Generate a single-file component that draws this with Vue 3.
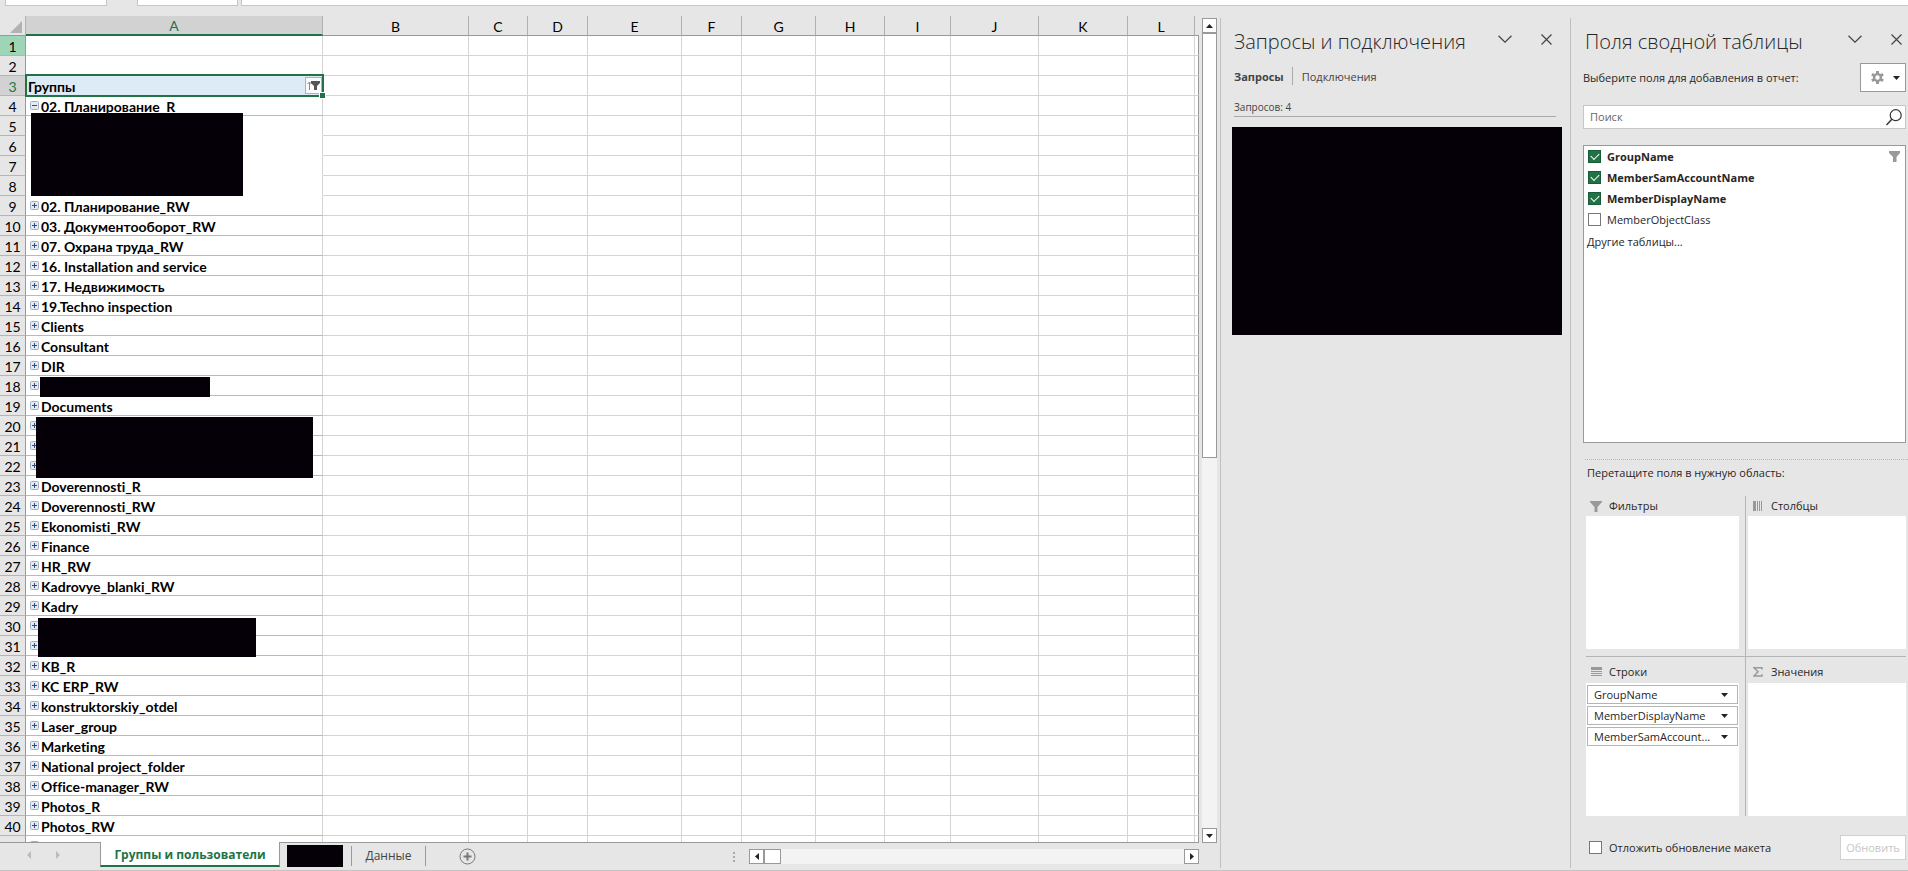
<script setup>
import { ref } from 'vue'

const columns = ['B', 'C', 'D', 'E', 'F', 'G', 'H', 'I', 'J', 'K', 'L']
const labels = {
  4: '02. Планирование_R',
  9: '02. Планирование_RW',
  10: '03. Документооборот_RW',
  11: '07. Охрана труда_RW',
  12: '16. Installation and service',
  13: '17. Недвижимость',
  14: '19.Techno inspection',
  15: 'Clients',
  16: 'Consultant',
  17: 'DIR',
  19: 'Documents',
  23: 'Doverennosti_R',
  24: 'Doverennosti_RW',
  25: 'Ekonomisti_RW',
  26: 'Finance',
  27: 'HR_RW',
  28: 'Kadrovye_blanki_RW',
  29: 'Kadry',
  32: 'KB_R',
  33: 'KC ERP_RW',
  34: 'konstruktorskiy_otdel',
  35: 'Laser_group',
  36: 'Marketing',
  37: 'National project_folder',
  38: 'Office-manager_RW',
  39: 'Photos_R',
  40: 'Photos_RW',
  41: 'Politiki',
}
const hiddenBlocks = { 5: 'hidden-members', 18: 'hidden-one', 20: 'hidden-three', 30: 'hidden-two' }
const rows = Array.from({ length: 41 }, (_, i) => {
  const n = i + 1
  return {
    n,
    number: n < 41 ? n : '',
    label: labels[n] || '',
    group: n === 4 || n > 8,
    member: n > 4 && n < 9,
    block: hiddenBlocks[n],
  }
})

const formula = ref('Группы')
const search = ref('')
const defer = ref(false)
const fields = ref([
  { id: 'f1', name: 'GroupName', on: true, filtered: true },
  { id: 'f2', name: 'MemberSamAccountName', on: true },
  { id: 'f3', name: 'MemberDisplayName', on: true },
  { id: 'f4', name: 'MemberObjectClass', on: false },
])
const rowFields = ['GroupName', 'MemberDisplayName', 'MemberSamAccount...']
</script>

<template>
  <div class="app">
    <div class="formula-bar">
      <div class="name-box"></div>
      <div class="fx-box"></div>
      <div class="formula-box"><input v-model="formula" aria-label="Строка формул" /></div>
    </div>

    <div class="main">
      <section class="sheet">
        <div class="sheet-top">
          <div class="grid-wrap">
            <table class="grid">
              <colgroup>
                <col class="c-head" /><col class="c-A" />
                <col v-for="c in columns" :key="c" :class="'c-' + c" />
                <col />
              </colgroup>
              <thead>
                <tr>
                  <th class="corner"><svg width="12" height="12" viewBox="0 0 12 12"><path d="M12 0V12H0Z" fill="#b2b2b2" /></svg></th>
                  <th class="active">A</th>
                  <th v-for="c in columns" :key="c">{{ c }}</th>
                  <th class="rest"></th>
                </tr>
              </thead>
              <tbody>
                <tr v-for="r in rows" :key="r.n">
                  <th :class="{ hover: r.n === 1, current: r.n === 3 }">{{ r.number }}</th>
                  <td class="a" :class="{ group: r.group, member: r.member, title: r.n === 3 }">
                    <div v-if="r.n === 3" class="title-cell">
                      <span>Группы</span>
                      <button class="filter-btn" aria-label="Фильтр">
                        <svg width="15" height="15" viewBox="0 0 15 15">
                          <path d="M3.500 12V4M1.500 6L3.500 4L5.500 6" fill="none" stroke="#888" />
                          <path d="M5 3H14V5L11 8V12H8V8L5 5Z" fill="#555" />
                        </svg>
                      </button>
                    </div>
                    <div v-else-if="r.group" class="group-cell">
                      <button class="toggle" :aria-label="r.n === 4 ? 'Свернуть' : 'Развернуть'">
                        <svg width="9" height="9" viewBox="0 0 9 9">
                          <rect x=".5" y=".5" width="8" height="8" rx="1" fill="#e4eaf2" stroke="#a3b0c4" />
                          <path :d="r.n === 4 ? 'M2 4.500H7' : 'M2 4.500H7M4.500 2V7'" stroke="#2f4a86" />
                        </svg>
                      </button>
                      <span>{{ r.label }}</span>
                    </div>
                    <div v-if="r.block" class="block" :class="r.block"></div>
                    <div v-if="r.n === 3" class="selection"></div>
                  </td>
                  <td v-for="c in columns" :key="c"></td>
                  <td class="rest"></td>
                </tr>
              </tbody>
            </table>
          </div>
          <div class="vscroll">
            <button class="arrow" aria-label="Вверх"><svg width="7" height="4" viewBox="0 0 7 4"><path d="M0 4L3.500 0L7 4Z" fill="#222" /></svg></button>
            <div class="vthumb"></div>
            <div class="track"></div>
            <button class="arrow" aria-label="Вниз"><svg width="7" height="4" viewBox="0 0 7 4"><path d="M0 0H7L3.500 4Z" fill="#222" /></svg></button>
          </div>
        </div>
        <div class="sheet-bottom">
          <div class="nav">
            <svg width="4" height="8" viewBox="0 0 4 8"><path d="M4 0V8L0 4Z" fill="#bbb" /></svg>
            <svg width="4" height="8" viewBox="0 0 4 8"><path d="M0 0V8L4 4Z" fill="#bbb" /></svg>
          </div>
          <button class="tab tab-on">Группы и пользователи</button>
          <div class="tab-hidden"></div>
          <button class="tab tab-off">Данные</button>
          <button class="add" aria-label="Новый лист">
            <svg width="17" height="17" viewBox="0 0 17 17"><circle cx="8.500" cy="8.500" r="7.500" fill="none" stroke="#777" /><path d="M4.500 8.500H12.500M8.500 4.500V12.500" stroke="#777" stroke-width="2" /></svg>
          </button>
          <svg class="dots" width="2" height="10" viewBox="0 0 2 10"><path d="M0 0H2V2H0ZM0 4H2V6H0ZM0 8H2V10H0Z" fill="#aaa" /></svg>
          <div class="hscroll">
            <button class="arrow" aria-label="Влево"><svg width="4" height="7" viewBox="0 0 4 7"><path d="M4 0V7L0 3.500Z" fill="#222" /></svg></button>
            <div class="hthumb"></div>
            <div class="track"></div>
            <button class="arrow" aria-label="Вправо"><svg width="4" height="7" viewBox="0 0 4 7"><path d="M0 0V7L4 3.500Z" fill="#222" /></svg></button>
          </div>
        </div>
      </section>

      <aside class="panel queries">
        <header>
          <h2>Запросы и подключения</h2>
          <button class="icon" aria-label="Параметры"><svg width="14" height="8" viewBox="0 0 14 8"><path d="M.5 .8L7 7.200L13.500 .8" fill="none" stroke="#444" stroke-width="1.200" /></svg></button>
          <button class="icon" aria-label="Закрыть"><svg width="11" height="11" viewBox="0 0 11 11"><path d="M.5 .5L10.500 10.500M10.500 .5L.5 10.500" stroke="#444" stroke-width="1.200" /></svg></button>
        </header>
        <nav class="q-tabs">
          <button class="on">Запросы</button>
          <button>Подключения</button>
        </nav>
        <p class="count">Запросов: 4</p>
        <div class="q-list"></div>
      </aside>

      <aside class="panel fields">
        <header>
          <h2>Поля сводной таблицы</h2>
          <button class="icon" aria-label="Параметры"><svg width="14" height="8" viewBox="0 0 14 8"><path d="M.5 .8L7 7.200L13.500 .8" fill="none" stroke="#444" stroke-width="1.200" /></svg></button>
          <button class="icon" aria-label="Закрыть"><svg width="11" height="11" viewBox="0 0 11 11"><path d="M.5 .5L10.500 10.500M10.500 .5L.5 10.500" stroke="#444" stroke-width="1.200" /></svg></button>
        </header>
        <div class="choose">
          <span>Выберите поля для добавления в отчет:</span>
          <button class="gear" aria-label="Сервис">
            <svg width="13" height="13" viewBox="0 0 13 13">
              <path d="M6.500 0V13M.9 3.200L12.100 9.800M.9 9.800L12.100 3.200" stroke="#999" stroke-width="3" />
              <circle cx="6.500" cy="6.500" r="3.400" fill="#fff" stroke="#999" stroke-width="2.400" />
            </svg>
            <svg width="7" height="4" viewBox="0 0 7 4"><path d="M0 0H7L3.500 4Z" fill="#222" /></svg>
          </button>
        </div>
        <div class="search">
          <input v-model="search" placeholder="Поиск" aria-label="Поиск" />
          <svg width="16" height="17" viewBox="0 0 16 17"><circle cx="9.700" cy="6.200" r="5.500" fill="none" stroke="#333" stroke-width="1.200" /><path d="M5.800 10.300L.5 16" stroke="#333" stroke-width="1.400" /></svg>
        </div>
        <div class="list">
          <div v-for="f in fields" :key="f.id" class="field">
            <input :id="f.id" v-model="f.on" type="checkbox" />
            <label :for="f.id" :class="{ bold: f.on }">{{ f.name }}</label>
            <svg v-if="f.filtered" width="11" height="11" viewBox="0 0 11 11"><path d="M0 0H11V2L7.500 6V11H4V6L0 2Z" fill="#999" /></svg>
          </div>
          <a class="more" href="#">Другие таблицы...</a>
        </div>
        <p class="drag">Перетащите поля в нужную область:</p>
        <div class="areas">
          <div class="area">
            <h3><svg width="12" height="11" viewBox="0 0 12 11"><path d="M0 0H12V1L7.500 6V11H4.500V6L0 1Z" fill="#999" /></svg>Фильтры</h3>
            <div class="drop"></div>
          </div>
          <div class="area">
            <h3><svg width="10" height="10" viewBox="0 0 10 10"><path d="M0 0H3V10H0ZM4 0H5V10H4ZM6 0H7V10H6ZM8 0H9V10H8Z" fill="#999" /></svg>Столбцы</h3>
            <div class="drop"></div>
          </div>
          <div class="area">
            <h3><svg width="12" height="10" viewBox="0 0 12 10"><path d="M1 0H12V3H1ZM1 4H12V5H1ZM1 6H12V7H1ZM1 8H12V9H1Z" fill="#999" /></svg>Строки</h3>
            <div class="drop">
              <button v-for="name in rowFields" :key="name" class="chip">
                <span>{{ name }}</span>
                <svg width="7" height="4" viewBox="0 0 7 4"><path d="M0 0H7L3.500 4Z" fill="#222" /></svg>
              </button>
            </div>
          </div>
          <div class="area">
            <h3><svg width="10" height="10" viewBox="0 0 10 10"><path d="M9 2.500V.8H1L5 4.800L1 9H9V7.200" fill="none" stroke="#999" stroke-width="1.500" /></svg>Значения</h3>
            <div class="drop"></div>
          </div>
        </div>
        <footer>
          <input id="defer" v-model="defer" type="checkbox" />
          <label for="defer">Отложить обновление макета</label>
          <button disabled>Обновить</button>
        </footer>
      </aside>
    </div>
  </div>
</template>

<style>
body { margin: 0; background: #e6e6e6; }
</style>

<style scoped>
.app {
  display: flex;
  flex-direction: column;
  height: 100vh;
  box-sizing: border-box;
  border-bottom: 1px solid #c3c3c3;
  background: #e6e6e6;
  color: #262626;
  font: 11px/16px "Open Sans", "Noto Sans", sans-serif;
  overflow: hidden;
}
.app * { box-sizing: border-box; }
button { font: inherit; color: inherit; margin: 0; padding: 0; border: 0; background: none; }
svg { display: block; flex: none; }
h2, h3, p { margin: 0; font-weight: 400; }

.formula-bar { display: flex; flex: none; height: 6px; padding-left: 5px; }
.name-box, .fx-box, .formula-box { background: #fff; border: 1px solid #c6c6c6; border-top: 0; }
.name-box { width: 102px; margin-right: 30px; }
.fx-box { width: 101px; margin-right: 3px; }
.formula-box { display: flex; align-items: flex-end; flex: 1; border-right: 0; overflow: hidden; }
.formula-box input { flex: 1; height: 24px; padding: 0 0 4px 20px; border: 0; outline: 0; font: 14px/20px Lato, sans-serif; background: none; }

.main { display: flex; flex: 1; min-height: 0; padding-top: 10px; }
.sheet { display: flex; flex-direction: column; flex: 1; min-width: 0; }
.sheet-top { display: flex; flex: 1; min-height: 0; padding-right: 3px; }
.grid-wrap { flex: 1; min-width: 0; margin-right: 3px; overflow: hidden; border-bottom: 1px solid #999; }

.grid { table-layout: fixed; width: 100%; border-spacing: 0; font: 14px/17px Lato, "Open Sans", sans-serif; font-variant-ligatures: none; color: #000; }
.c-head { width: 26px; } .c-A { width: 297px; } .c-B { width: 146px; } .c-C { width: 59px; }
.c-D { width: 60px; } .c-E { width: 94px; } .c-F { width: 60px; } .c-G { width: 74px; }
.c-H { width: 69px; } .c-I { width: 66px; } .c-J { width: 88px; } .c-K { width: 89px; } .c-L { width: 67px; }
.grid th, .grid td { height: 20px; padding: 0; border-right: 1px solid #d4d4d4; border-bottom: 1px solid #d4d4d4; }
.grid th { padding-top: 2px; font-weight: 400; text-align: center; background: #e6e6e6; }
.grid td { background: #fff; }
.grid thead th { border-right-color: #b0b0b0; border-bottom-color: #999; }
.grid tbody th { border-right-color: #999; border-bottom-color: #b5b5b5; }
.grid thead .active { background: #d2d2d2; color: #217346; border-bottom: 2px solid #217346; line-height: 16px; }
.grid thead .corner { padding-left: 10px; }
.grid thead .rest { border-right: 0; }
.grid tbody .rest { border-right-color: #999; }
.grid .hover { background: #9fd5b7; }
.grid .current { background: #d2d2d2; color: #217346; }
.a { position: relative; font-weight: 700; white-space: nowrap; }
.a span { padding-top: 2px; }
.grid .group { border-bottom-color: #9bc2e6; }
.grid .member { border-bottom-color: #fff; }
.grid .title { background: #ddebf7; }
.title-cell { display: flex; align-items: center; justify-content: space-between; height: 19px; padding-left: 2px; }
.filter-btn { display: flex; width: 17px; height: 17px; border: 1px solid #a8b4c4; background: #fafbfd; }
.group-cell { display: flex; align-items: center; height: 19px; padding-left: 4px; gap: 2px; }
.selection { position: absolute; z-index: 3; inset: -2px -2px -2px -1px; border: 2px solid #217346; }
.selection::after { content: ""; position: absolute; right: -3px; bottom: -3px; width: 5px; height: 5px; background: #217346; outline: 1px solid #fff; }
.block { position: absolute; z-index: 2; background: #050008; }
.hidden-members { left: 5px; top: -3px; width: 212px; height: 83px; }
.hidden-one { left: 14px; top: 1px; width: 170px; height: 20px; }
.hidden-three { left: 10px; top: 1px; width: 277px; height: 61px; }
.hidden-two { left: 12px; top: 2px; width: 218px; height: 39px; }

.vscroll { display: flex; flex-direction: column; width: 15px; padding-top: 2px; }
.arrow { display: flex; align-items: center; justify-content: center; flex: none; width: 15px; height: 15px; border: 1px solid #999; background: #fff; }
.vthumb { flex: 0 0 425px; border: 1px solid #999; background: #fff; }
.track { flex: 1; background: #f3f3f3; }

.sheet-bottom { display: flex; align-items: flex-start; flex: none; height: 27px; padding-right: 21px; }
.nav { display: flex; gap: 25px; width: 100px; padding: 8px 0 0 27px; }
.tab { font-size: 12px; white-space: nowrap; }
.tab-on { position: relative; width: 180px; height: 25px; margin-top: -1px; padding-top: 2px; border: 1px solid #999; border-width: 0 1px; border-bottom: 2px solid #217346; background: #fff; color: #217346; font-weight: 700; }
.tab-hidden { width: 56px; height: 22px; margin: 2px 8px 0 7px; background: #050008; }
.tab-off { width: 75px; height: 20px; margin-top: 3px; border: 1px solid #999; border-width: 0 1px; color: #444; }
.add { margin: 5px auto 0 33px; }
.dots { margin: 9px 14px 0 0; }
.hscroll { display: flex; width: 450px; margin-top: 6px; }
.hthumb { width: 17px; border: 1px solid #999; background: #fff; }

.panel { flex: none; display: flex; flex-direction: column; margin: 2px 0; border-left: 1px solid #c0c0c0; }
.panel header { display: flex; align-items: flex-start; padding-top: 10px; height: 43px; }
.panel h2 { font-size: 20px; line-height: 28px; font-weight: 300; white-space: nowrap; }
.panel header .icon { height: 22px; }
.panel header .icon:nth-of-type(1) { margin-left: auto; }
.queries { width: 350px; padding: 0 8px 0 11px; }
.queries header { padding-left: 2px; padding-right: 10px; }
.queries header .icon:nth-of-type(2) { margin-left: 29px; }
.q-tabs { display: flex; margin: 6px 0 0 2px; }
.q-tabs button { height: 18px; padding-top: 1px; color: #444; }
.q-tabs .on { font-weight: 700; padding-right: 8px; margin-right: 9px; border-right: 1px solid #aaa; }
.count { margin: 14px 6px 10px 2px; padding-bottom: 1px; border-bottom: 1px solid #aaa; font-size: 10px; color: #444; }
.q-list { height: 208px; background: #050008; }

.fields { width: 338px; padding: 0 2px 0 12px; }
.fields header { padding: 10px 4px 0 2px; }
.fields header .icon:nth-of-type(2) { margin-left: 29px; }
.choose { display: flex; justify-content: space-between; align-items: center; margin-top: 2px; height: 29px; }
.gear { display: flex; align-items: center; justify-content: center; gap: 9px; width: 46px; height: 29px; padding-left: 4px; border: 1px solid #999; background: #fff; }
.search { display: flex; align-items: center; height: 24px; margin: 13px 0 16px; padding: 0 3px 0 6px; border: 1px solid #c6c6c6; background: #fff; }
.search input { flex: 1; border: 0; padding: 0; outline: 0; font: inherit; background: none; }
.search input::placeholder { color: #666; }
.list { flex: 1; min-height: 120px; border: 1px solid #999; background: #fff; overflow: hidden; }
.field { display: flex; align-items: center; height: 21px; padding: 0 5px 0 4px; }
.field label { flex: 1; margin-left: 6px; }
.field .bold { font-weight: 700; }
input[type="checkbox"] { appearance: none; width: 13px; height: 13px; margin: 0; border: 1px solid #777; background: #fff; }
input[type="checkbox"]:checked { border-color: #185c37; background: #217346; }
input[type="checkbox"]:checked::after { content: ""; display: block; width: 7px; height: 4px; margin: 2px; border: solid #fff; border-width: 0 0 1px 1px; transform: rotate(-45deg); }
.more { display: block; padding: 4px 3px; color: inherit; text-decoration: none; }
.drag { margin: 16px -2px 15px 2px; padding: 5px 0 0 2px; border-top: 1px dotted #b5b5b5; }
.areas { display: grid; grid-template-columns: 160px 1fr; margin-left: 3px; }
.area { padding-bottom: 7px; }
.area:nth-child(odd) { padding-right: 6px; border-right: 1px solid #b5b5b5; }
.area:nth-child(even) { padding-left: 2px; }
.area:nth-child(n + 3) { padding-bottom: 0; border-top: 1px solid #b5b5b5; }
.area h3 { display: flex; align-items: center; gap: 7px; height: 20px; padding-left: 4px; font-size: 11px; }
.area:nth-child(n + 3) h3 { height: 26px; padding-top: 4px; }
.area:nth-child(even) h3 { padding-left: 5px; gap: 8px; }
.drop { display: flex; flex-direction: column; gap: 2px; height: 133px; padding: 2px 1px; background: #fff; }
.chip { display: flex; align-items: center; justify-content: space-between; height: 19px; padding: 0 9px 0 6px; border: 1px solid #b5b5b5; background: #fff; }
footer { display: flex; align-items: center; height: 25px; margin: 19px 0 8px; padding-left: 6px; }
footer label { margin: 0 auto 0 7px; }
footer button { width: 66px; height: 25px; border: 1px solid #d0d0d0; background: #fff; color: #c6c6c6; }
</style>
